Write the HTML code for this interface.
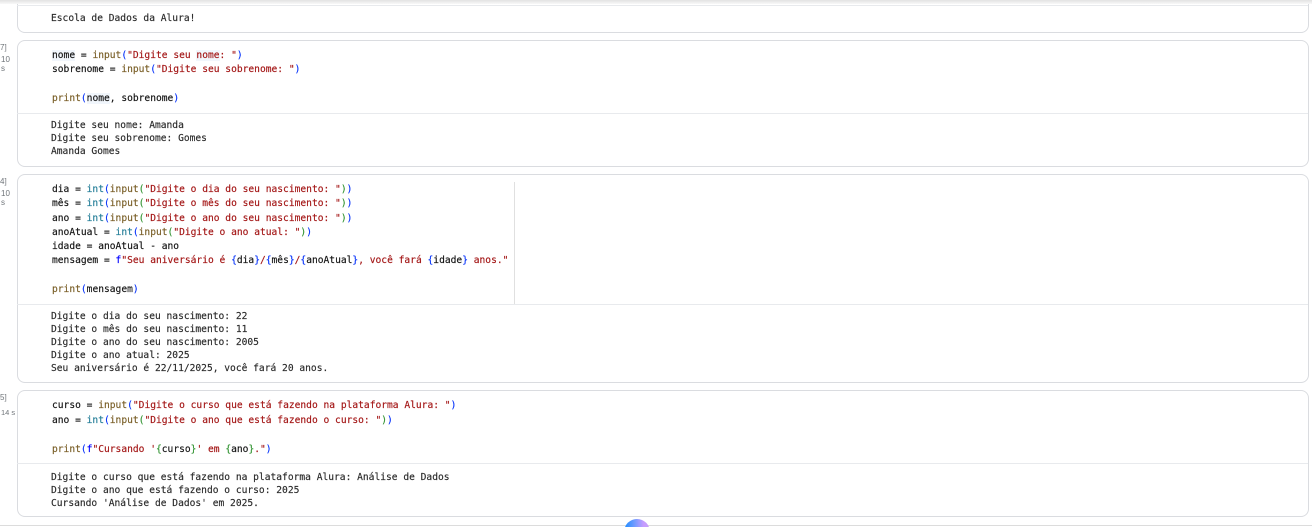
<!DOCTYPE html>
<html lang="pt">
<head>
<meta charset="utf-8">
<title>Notebook</title>
<style>
html,body{margin:0;padding:0;background:#fff;width:1312px;height:527px;overflow:hidden}
#w{position:relative;width:1312px;height:527px;overflow:hidden;font-family:"DejaVu Sans Mono","Liberation Mono",monospace;font-size:9.6px;color:#111;-webkit-text-stroke:.15px}
.card{position:absolute;left:17px;width:1290px;border:1px solid #dadce0;border-radius:8px;box-sizing:content-box;background:#fff}
.h{position:absolute;left:17px;width:1291px;height:1px;background:#e8eaed}
.l{position:absolute;height:14px;line-height:14px;white-space:pre;left:52px;margin-top:2px}
.o{left:51px;color:#2a2a2a}
.t{position:absolute;font-family:"Liberation Sans",sans-serif;font-size:8px;line-height:10px;color:#70757a;white-space:pre;-webkit-text-stroke:0}
.f{color:#795e26}.s{color:#a31515}.b{color:#0431fa}.g{color:#319331}.i{color:#267f99}.k{color:#0000ff}
.m{background:#f1f6fc}
</style>
</head>
<body>
<div id="w">
<div class="card" style="top:-20px;height:51px"></div>
<div style="position:absolute;left:0;top:0;width:1312px;height:4px;background:linear-gradient(#e2e2e2,#f8f8f8)"></div>
<div class="h" style="top:5px"></div>
<div class="l o" style="top:10px">Escola de Dados da Alura!</div>

<div class="t" style="left:0;top:43px">7]</div>
<div class="t" style="left:1px;top:55px">10</div>
<div class="t" style="left:1px;top:64px">s</div>
<div class="card" style="top:40px;height:125px"></div>
<div class="l" style="top:47px"><span class="m">nome</span> = <span class="f">input</span><span class="b">(</span><span class="s">"Digite seu <span class="m">nome</span>: "</span><span class="b">)</span></div>
<div class="l" style="top:61px">sobrenome = <span class="f">input</span><span class="b">(</span><span class="s">"Digite seu sobrenome: "</span><span class="b">)</span></div>
<div class="l" style="top:90px"><span class="f">print</span><span class="b">(</span><span class="m">nome</span>, sobrenome<span class="b">)</span></div>
<div class="h" style="top:113px"></div>
<div class="l o" style="top:117px">Digite seu nome: Amanda</div>
<div class="l o" style="top:130px">Digite seu sobrenome: Gomes</div>
<div class="l o" style="top:143px">Amanda Gomes</div>

<div class="t" style="left:0;top:177px">4]</div>
<div class="t" style="left:1px;top:189px">10</div>
<div class="t" style="left:1px;top:198px">s</div>
<div class="card" style="top:174px;height:207px"></div>
<div style="position:absolute;left:514px;top:182px;width:1px;height:122px;background:#e0e0e0"></div>
<div class="l" style="top:181px">dia = <span class="i">int</span><span class="b">(</span><span class="f">input</span><span class="g">(</span><span class="s">"Digite o dia do seu nascimento: "</span><span class="g">)</span><span class="b">)</span></div>
<div class="l" style="top:195px">mês = <span class="i">int</span><span class="b">(</span><span class="f">input</span><span class="g">(</span><span class="s">"Digite o mês do seu nascimento: "</span><span class="g">)</span><span class="b">)</span></div>
<div class="l" style="top:210px">ano = <span class="i">int</span><span class="b">(</span><span class="f">input</span><span class="g">(</span><span class="s">"Digite o ano do seu nascimento: "</span><span class="g">)</span><span class="b">)</span></div>
<div class="l" style="top:224px">anoAtual = <span class="i">int</span><span class="b">(</span><span class="f">input</span><span class="g">(</span><span class="s">"Digite o ano atual: "</span><span class="g">)</span><span class="b">)</span></div>
<div class="l" style="top:238px">idade = anoAtual - ano</div>
<div class="l" style="top:252px">mensagem = <span class="k">f</span><span class="s">"Seu aniversário é </span><span class="b">{</span>dia<span class="b">}</span><span class="s">/</span><span class="b">{</span>mês<span class="b">}</span><span class="s">/</span><span class="b">{</span>anoAtual<span class="b">}</span><span class="s">, você fará </span><span class="b">{</span>idade<span class="b">}</span><span class="s"> anos."</span></div>
<div class="l" style="top:281px"><span class="f">print</span><span class="b">(</span>mensagem<span class="b">)</span></div>
<div class="h" style="top:304px"></div>
<div class="l o" style="top:308px">Digite o dia do seu nascimento: 22</div>
<div class="l o" style="top:321px">Digite o mês do seu nascimento: 11</div>
<div class="l o" style="top:334px">Digite o ano do seu nascimento: 2005</div>
<div class="l o" style="top:347px">Digite o ano atual: 2025</div>
<div class="l o" style="top:360px">Seu aniversário é 22/11/2025, você fará 20 anos.</div>

<div class="t" style="left:0;top:393px">5]</div>
<div class="t" style="left:1px;top:408px;font-size:7.5px">14 s</div>
<div class="card" style="top:390px;height:125px"></div>
<div class="l" style="top:397px">curso = <span class="f">input</span><span class="b">(</span><span class="s">"Digite o curso que está fazendo na plataforma Alura: "</span><span class="b">)</span></div>
<div class="l" style="top:412px">ano = <span class="i">int</span><span class="b">(</span><span class="f">input</span><span class="g">(</span><span class="s">"Digite o ano que está fazendo o curso: "</span><span class="g">)</span><span class="b">)</span></div>
<div class="l" style="top:441px"><span class="f">print</span><span class="b">(</span><span class="k">f</span><span class="s">"Cursando '</span><span class="g">{</span>curso<span class="g">}</span><span class="s">' em </span><span class="g">{</span>ano<span class="g">}</span><span class="s">."</span><span class="b">)</span></div>
<div class="h" style="top:463px"></div>
<div class="l o" style="top:469px">Digite o curso que está fazendo na plataforma Alura: Análise de Dados</div>
<div class="l o" style="top:482px">Digite o ano que está fazendo o curso: 2025</div>
<div class="l o" style="top:495px">Cursando 'Análise de Dados' em 2025.</div>

<div style="position:absolute;left:0;top:525px;width:1312px;height:1px;background:#dcdcdc"></div>
<div style="position:absolute;left:624px;top:519px;width:26px;height:26px;border-radius:50%;background:linear-gradient(90deg,#1a8cff 0%,#6f9bff 40%,#c59cff 75%,#c8a0f8 100%)"></div>
</div>
</body>
</html>
